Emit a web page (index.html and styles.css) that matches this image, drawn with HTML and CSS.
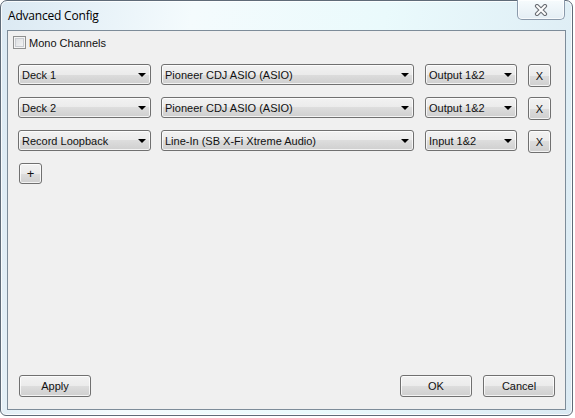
FILE: index.html
```html
<!DOCTYPE html>
<html>
<head>
<meta charset="utf-8">
<link rel="stylesheet" href="styles.css">
</head>
<body>
<div class="window">
  <div class="titlebar">
    <span class="title">Advanced Config</span>
    <div class="close">
      <svg width="14" height="12" viewBox="0 0 14 12">
        <path d="M3 2 L11 10 M11 2 L3 10" stroke="#6b6f75" stroke-width="4.2" stroke-linecap="round"/>
        <path d="M3 2 L11 10 M11 2 L3 10" stroke="#ffffff" stroke-width="2" stroke-linecap="round"/>
      </svg>
    </div>
  </div>
  <div class="client">
    <label class="mono"><span class="check"></span><span>Mono Channels</span></label>
    <div class="rows">
      <div class="row">
        <div class="combo c1"><span>Deck 1</span><i class="arrow"></i></div>
        <div class="combo c2"><span>Pioneer CDJ ASIO (ASIO)</span><i class="arrow"></i></div>
        <div class="combo c3"><span>Output 1&amp;2</span><i class="arrow"></i></div>
        <div class="btn xbtn">X</div>
      </div>
      <div class="row">
        <div class="combo c1"><span>Deck 2</span><i class="arrow"></i></div>
        <div class="combo c2"><span>Pioneer CDJ ASIO (ASIO)</span><i class="arrow"></i></div>
        <div class="combo c3"><span>Output 1&amp;2</span><i class="arrow"></i></div>
        <div class="btn xbtn">X</div>
      </div>
      <div class="row">
        <div class="combo c1"><span>Record Loopback</span><i class="arrow"></i></div>
        <div class="combo c2"><span>Line-In (SB X-Fi Xtreme Audio)</span><i class="arrow"></i></div>
        <div class="combo c3"><span>Input 1&amp;2</span><i class="arrow"></i></div>
        <div class="btn xbtn">X</div>
      </div>
      <div class="btn plus">+</div>
    </div>
    <div class="footer">
      <div class="btn wide">Apply</div>
      <div class="spacer"></div>
      <div class="btn wide">OK</div>
      <div class="btn wide">Cancel</div>
    </div>
  </div>
</div>
</body>
</html>
```
FILE: styles.css
```css
html, body {
  margin: 0;
  padding: 0;
  background: #ffffff;
}
body {
  width: 575px;
  height: 418px;
  overflow: hidden;
  font-family: "Liberation Sans", Arial, sans-serif;
  font-size: 11px;
  color: #111;
}
.window {
  box-sizing: border-box;
  width: 573px;
  height: 416px;
  border: 1px solid #5f6b78;
  border-radius: 7px 7px 6px 6px;
  background: linear-gradient(100deg, #dbe9f3 0%, #f4fbfd 30%, #eafafc 60%, #dbeaf3 100%);
  box-shadow: inset 0 0 0 1px rgba(255,255,255,0.8);
  padding: 0 6px 5px 6px;
  display: flex;
  flex-direction: column;
}
.titlebar {
  height: 29px;
  display: flex;
  align-items: flex-start;
  justify-content: space-between;
}
.title {
  font-family: "Open Sans", "Liberation Sans", sans-serif;
  font-size: 12px;
  color: #000;
  padding: 6px 0 0 1px;
  letter-spacing: -0.2px;
}
.close {
  box-sizing: border-box;
  width: 48px;
  height: 20px;
  margin-top: -1px;
  margin-right: 1px;
  border: 1px solid #8b9aab;
  border-top: none;
  border-radius: 0 0 5px 5px;
  background: linear-gradient(#f6fbfd, #e4eef4);
  box-shadow: inset 0 0 0 1px rgba(255,255,255,0.7);
  display: flex;
  align-items: center;
  justify-content: center;
}
.client {
  flex: 1;
  box-sizing: border-box;
  border: 1px solid #7d8c99;
  background: #f0f0f0;
  display: flex;
  flex-direction: column;
}
.mono {
  display: flex;
  align-items: center;
  margin: 5px 0 0 5px;
  height: 13px;
  gap: 3px;
}
.check {
  box-sizing: border-box;
  width: 13px;
  height: 13px;
  border: 1px solid #8e8f8f;
  background: linear-gradient(135deg, #d8dadd, #f8f8f8);
  box-shadow: inset 0 0 0 1px #f4f4f4, inset 0 0 0 2px #c9ccd1;
}
.rows {
  margin: 15px 0 0 10px;
  display: flex;
  flex-direction: column;
  gap: 11px;
}
.row {
  display: flex;
  align-items: flex-start;
  height: 22px;
}
.combo {
  box-sizing: border-box;
  height: 21px;
  border: 1px solid #707070;
  border-radius: 3px;
  background: linear-gradient(#f2f2f2 0%, #ebebeb 50%, #dddddd 50%, #cfcfcf 100%);
  box-shadow: inset 0 0 0 1px rgba(255,255,255,0.75);
  display: flex;
  align-items: center;
  padding: 0 4px 0 3px;
  justify-content: space-between;
}
.c1 { width: 133px; margin-right: 10px; }
.c2 { width: 253px; margin-right: 11px; }
.c3 { width: 92px; margin-right: 11px; }
.arrow {
  width: 0;
  height: 0;
  border-left: 4px solid transparent;
  border-right: 4px solid transparent;
  border-top: 4px solid #000;
  margin-top: 1px;
}
.btn {
  box-sizing: border-box;
  border: 1px solid #707070;
  border-radius: 3px;
  background: linear-gradient(#f2f2f2 0%, #ebebeb 50%, #dddddd 50%, #cfcfcf 100%);
  box-shadow: inset 0 0 0 1px rgba(255,255,255,0.75);
  display: flex;
  align-items: center;
  justify-content: center;
}
.xbtn {
  width: 23px;
  height: 23px;
  margin-top: 0;
  font-size: 11px;
}
.plus {
  width: 23px;
  height: 21px;
  margin-top: 0px;
  margin-left: 1px;
  font-size: 13px;
}
.footer {
  margin-top: auto;
  display: flex;
  align-items: center;
  padding: 0 10px 12px 11px;
  gap: 11px;
}
.spacer { flex: 1; }
.wide {
  width: 72px;
  height: 22px;
}
```
